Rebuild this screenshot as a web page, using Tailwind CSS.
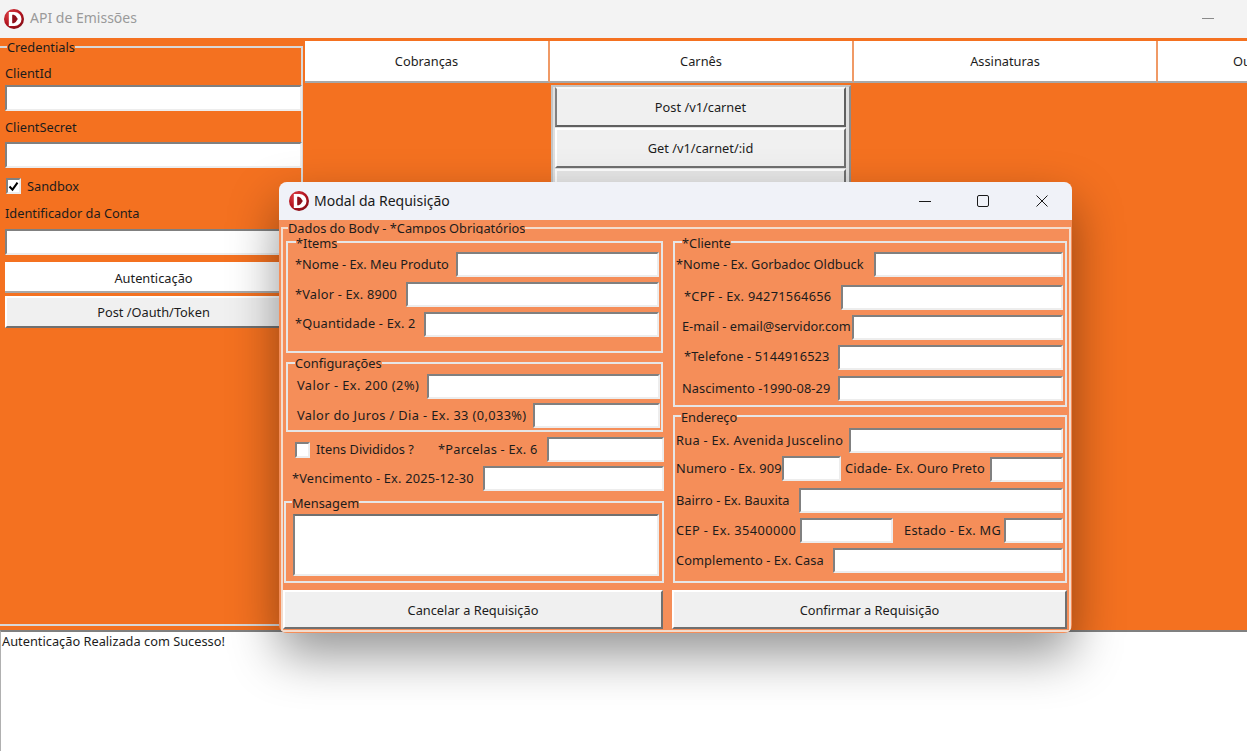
<!DOCTYPE html>
<html lang="en">
<head>
  <meta charset="UTF-8">
  <meta name="viewport" content="width=device-width, initial-scale=1.0">
  <title>API de Emissões</title>
  <script src="https://cdn.jsdelivr.net/npm/@tailwindcss/browser@4"></script>
</head>
<body class="relative h-[751px] w-[1247px] overflow-hidden bg-white font-['Noto_Sans',sans-serif] text-[12.8px] leading-[16px] text-[#1c1c1c]">

  <!-- Main window title bar -->
  <header class="flex h-[38px] items-center bg-[#f3f3f3] pl-[4px] pr-[33px]">
    <svg class="mb-px h-[20px] w-[20px] shrink-0" viewBox="0 0 20 20">
      <defs>
        <radialGradient id="logo-red" cx="35%" cy="30%" r="80%">
          <stop offset="0%" stop-color="#e0454a"/>
          <stop offset="60%" stop-color="#b3141f"/>
          <stop offset="100%" stop-color="#7c0d15"/>
        </radialGradient>
      </defs>
      <circle cx="10" cy="10" r="10" fill="url(#logo-red)"/>
      <path d="M4.8 3h5.7a7 7 0 0 1 0 14H4.8z" fill="#fff"/>
      <path d="M8.2 5.8h1.6q2 .3 4 4.2q-2 3.9-4 4.2H8.2z" fill="#8f101a"/>
    </svg>
    <span class="mb-[2px] ml-[6px] text-[14px] text-[#9a9a9a]">API de Emissões</span>
    <span class="mb-[2px] ml-auto h-px w-[12px] bg-[#8a8a8a]"></span>
  </header>

  <!-- Orange work area -->
  <main class="flex h-[592px] bg-[#f47120]">
    <aside class="w-[303px] shrink-0 pt-[3px]">
      <fieldset class="-ml-[2px] h-[585px] w-[305px] min-w-0 border-2 border-[#d8d8d8] pl-[5px]">
        <legend class="ml-[2px] h-[12px] leading-[12px]">Credentials</legend>
        <label class="mt-[12px] block h-[16px]">ClientId</label>
        <input type="text" class="mt-[4px] block h-[26px] w-[297px] border-2 border-t-[#808080] border-l-[#808080] border-r-[#ededed] border-b-[#ededed] bg-white">
        <label class="mt-[8px] block h-[16px]">ClientSecret</label>
        <input type="text" class="mt-[7px] block h-[26px] w-[297px] border-2 border-t-[#808080] border-l-[#808080] border-r-[#ededed] border-b-[#ededed] bg-white">
        <div class="mt-[10px] flex h-[16px] items-center">
          <span class="ml-[1px] flex h-[16px] w-[15px] items-center justify-center border-2 border-t-[#808080] border-l-[#808080] border-r-[#ededed] border-b-[#ededed] bg-white">
            <svg class="h-[11px] w-[11px]" viewBox="0 0 11 11"><path d="M1.5 5.5l3 3.2 5-7" fill="none" stroke="#000" stroke-width="2"/></svg>
          </span>
          <span class="ml-[6px]">Sandbox</span>
        </div>
        <label class="mt-[11px] block h-[16px]">Identificador da Conta</label>
        <input type="text" class="mt-[8px] block h-[26px] w-[297px] border-2 border-t-[#808080] border-l-[#808080] border-r-[#ededed] border-b-[#ededed] bg-white">
        <button class="mt-[7px] block h-[31px] w-[297px] border-b-2 border-[#a8a8a8] bg-white pt-[2px]">Autenticação</button>
        <button class="mt-[3px] block h-[32px] w-[297px] border-2 border-t-white border-l-white border-r-[#707070] border-b-[#707070] bg-[#f0f0f0]">Post /Oauth/Token</button>
      </fieldset>
    </aside>

    <section class="min-w-0 flex-1 pl-[2px] pt-[3px]">
      <!-- Tabs -->
      <nav class="flex h-[42px] overflow-hidden">
        <button class="h-full w-[245px] shrink-0 border-r-2 border-b-2 border-r-[#f09a66] border-b-[#a8a8a8] bg-white">Cobranças</button>
        <button class="h-full w-[304px] shrink-0 border-r-2 border-b-2 border-r-[#f09a66] border-b-[#a8a8a8] bg-white">Carnês</button>
        <button class="h-full w-[304px] shrink-0 border-r-2 border-b-2 border-r-[#f09a66] border-b-[#a8a8a8] bg-white">Assinaturas</button>
        <button class="h-full flex-1 border-b-2 border-b-[#a8a8a8] bg-white pl-[75px] text-left">Ou</button>
      </nav>
      <!-- Carnês endpoints -->
      <div class="ml-[246px] mt-[2px] flex h-[300px] w-[300px] flex-col gap-[1px] border-2 border-[#c4c4c4] border-r-[#8c8c8c] bg-[#e0e0e0] pl-[2px] pr-[3px]">
        <button class="h-[40px] border-2 border-t-[#f8f8f8] border-l-[#808080] border-r-[#606060] border-b-[#606060] bg-[#f0f0f0]">Post /v1/carnet</button>
        <button class="h-[40px] border-2 border-t-white border-l-white border-r-[#707070] border-b-[#707070] bg-[#f0f0f0]">Get /v1/carnet/:id</button>
        <button class="h-[40px] border-2 border-t-white border-l-white border-r-[#707070] border-b-[#707070] bg-[#e8e8e8]"></button>
      </div>
    </section>
  </main>

  <!-- Log output -->
  <div class="h-[121px] border-t-2 border-l border-t-[#808080] border-l-[#b0b0b0] pl-px pt-[1px]">Autenticação Realizada com Sucesso!</div>

  <!-- Modal window -->
  <div class="absolute left-[279px] top-[182px] h-[451px] w-[793px] overflow-hidden rounded-lg bg-[#f58e59] shadow-[0_22px_50px_rgba(0,0,0,0.42)]">
    <div class="flex h-[38px] items-center bg-[#f0f2f8] pl-[10px] pr-px">
      <svg class="h-[20px] w-[20px] shrink-0" viewBox="0 0 20 20">
        <circle cx="10" cy="10" r="10" fill="url(#logo-red)"/>
        <path d="M4.8 3h5.7a7 7 0 0 1 0 14H4.8z" fill="#fff"/>
        <path d="M8.2 5.8h1.6q2 .3 4 4.2q-2 3.9-4 4.2H8.2z" fill="#8f101a"/>
      </svg>
      <span class="ml-[5px] text-[14px] text-[#1a1a1a]">Modal da Requisição</span>
      <div class="ml-auto flex">
        <span class="flex h-[38px] w-[56px] items-center justify-center">
          <svg class="h-[12px] w-[12px]" viewBox="0 0 12 12"><path d="M0 6.5h12" stroke="#1a1a1a"/></svg>
        </span>
        <span class="flex h-[38px] w-[60px] items-center justify-center">
          <svg class="h-[12px] w-[12px]" viewBox="0 0 12 12"><rect x="0.5" y="0.5" width="11" height="11" rx="1.5" fill="none" stroke="#1a1a1a"/></svg>
        </span>
        <span class="flex h-[38px] w-[58px] items-center justify-center">
          <svg class="h-[12px] w-[12px]" viewBox="0 0 12 12"><path d="M0.5 0.5l11 11M11.5 0.5l-11 11" stroke="#1a1a1a"/></svg>
        </span>
      </div>
    </div>

    <div class="ml-[2px] w-[790px] pt-[2px]">
      <fieldset class="h-[410px] min-w-0 border-2 border-[#f3dccd]">
        <legend class="ml-[5px] h-[12px] overflow-hidden leading-[13px]">Dados do Body - *Campos Obrigatórios</legend>
        <div class="mt-[2px] flex gap-[8px]">

          <!-- Left column -->
          <div class="w-[381px] shrink-0 pl-px">
            <fieldset class="ml-[2px] h-[117px] w-[377px] min-w-0 border-2 border-[#e6e6e6]">
              <legend class="ml-[8px] h-[12px] leading-[15px]">*Items</legend>
              <div class="flex flex-col gap-[5px] pl-[7px] pr-[2px] pt-[4px]">
                <div class="flex items-center"><span class="w-[161px] shrink-0 pb-[2px]">*Nome - Ex. Meu Produto</span><input type="text" class="h-[25px] min-w-0 flex-1 border-2 border-t-[#808080] border-l-[#808080] border-r-[#ededed] border-b-[#ededed] bg-white"></div>
                <div class="flex items-center"><span class="w-[111px] shrink-0 pb-[2px] tracking-[0.2px]">*Valor - Ex. 8900</span><input type="text" class="h-[25px] min-w-0 flex-1 border-2 border-t-[#808080] border-l-[#808080] border-r-[#ededed] border-b-[#ededed] bg-white"></div>
                <div class="flex items-center"><span class="w-[129px] shrink-0 pb-[4px] tracking-[0.2px]">*Quantidade - Ex. 2</span><input type="text" class="h-[25px] min-w-0 flex-1 border-2 border-t-[#808080] border-l-[#808080] border-r-[#ededed] border-b-[#ededed] bg-white"></div>
              </div>
            </fieldset>
            <fieldset class="ml-[2px] mt-[4px] h-[75px] w-[377px] min-w-0 border-2 border-[#e6e6e6]">
              <legend class="ml-[7px] h-[12px] leading-[12px]">Configurações</legend>
              <div class="flex flex-col gap-[4px] pl-[9px] pr-px pt-[5px]">
                <div class="flex items-center"><span class="w-[130px] shrink-0 pb-[4px] tracking-[0.45px]">Valor - Ex. 200 (2%)</span><input type="text" class="h-[25px] min-w-0 flex-1 border-2 border-t-[#808080] border-l-[#808080] border-r-[#ededed] border-b-[#ededed] bg-white"></div>
                <div class="flex items-center"><span class="w-[236px] shrink-0 pb-[2px] tracking-[0.38px]">Valor do Juros / Dia - Ex. 33 (0,033%)</span><input type="text" class="h-[25px] min-w-0 flex-1 border-2 border-t-[#808080] border-l-[#808080] border-r-[#ededed] border-b-[#ededed] bg-white"></div>
              </div>
            </fieldset>
            <div class="mt-[5px] flex items-center pl-[11px]">
              <span class="h-[16px] w-[15px] shrink-0 border-2 border-t-[#808080] border-l-[#808080] border-r-[#ededed] border-b-[#ededed] bg-white"></span>
              <span class="ml-[6px] w-[122px] shrink-0 pb-[2px]">Itens Divididos ?</span>
              <span class="w-[109px] shrink-0 pb-[2px] tracking-[0.23px]">*Parcelas - Ex. 6</span>
              <input type="text" class="h-[25px] min-w-0 flex-1 border-2 border-t-[#808080] border-l-[#808080] border-r-[#ededed] border-b-[#ededed] bg-white">
            </div>
            <div class="mt-[4px] flex items-center pl-[8px]">
              <span class="w-[191px] shrink-0 pb-[2px] tracking-[0.18px]">*Vencimento - Ex. 2025-12-30</span>
              <input type="text" class="h-[25px] min-w-0 flex-1 border-2 border-t-[#808080] border-l-[#808080] border-r-[#ededed] border-b-[#ededed] bg-white">
            </div>
            <fieldset class="mt-[5px] h-[87px] min-w-0 border-2 border-[#e6e6e6]">
              <legend class="ml-[6px] h-[12px] leading-[15px]">Mensagem</legend>
              <textarea class="ml-[7px] mt-[6px] block h-[62px] w-[366px] resize-none border-2 border-t-[#707070] border-l-[#808080] border-r-[#ededed] border-b-[#ededed] bg-white"></textarea>
            </fieldset>
          </div>

          <!-- Right column -->
          <div class="w-[395px] shrink-0 pl-px">
            <fieldset class="h-[171px] min-w-0 border-2 border-[#e6e6e6]">
              <legend class="ml-[7px] h-[12px] leading-[15px]">*Cliente</legend>
              <div class="pr-[2px] pt-[4px]">
                <div class="flex items-center pl-px"><span class="w-[198px] shrink-0 pb-[2px]">*Nome - Ex. Gorbadoc Oldbuck</span><input type="text" class="h-[25px] min-w-0 flex-1 border-2 border-t-[#808080] border-l-[#808080] border-r-[#ededed] border-b-[#ededed] bg-white"></div>
                <div class="mt-[8px] flex items-center pl-[9px]"><span class="w-[157px] shrink-0 pb-[4px] tracking-[0.27px]">*CPF - Ex. 94271564656</span><input type="text" class="h-[25px] min-w-0 flex-1 border-2 border-t-[#808080] border-l-[#808080] border-r-[#ededed] border-b-[#ededed] bg-white"></div>
                <div class="mt-[5px] flex items-center pl-[7px]"><span class="w-[170px] shrink-0 pb-[4px]">E-mail - email@servidor.com</span><input type="text" class="h-[25px] min-w-0 flex-1 border-2 border-t-[#808080] border-l-[#808080] border-r-[#ededed] border-b-[#ededed] bg-white"></div>
                <div class="mt-[5px] flex items-center pl-[9px]"><span class="w-[154px] shrink-0 pb-[4px] tracking-[0.15px]">*Telefone - 5144916523</span><input type="text" class="h-[25px] min-w-0 flex-1 border-2 border-t-[#808080] border-l-[#808080] border-r-[#ededed] border-b-[#ededed] bg-white"></div>
                <div class="mt-[6px] flex items-center pl-[7px]"><span class="w-[156px] shrink-0 pb-[2px] tracking-[0.1px]">Nascimento -1990-08-29</span><input type="text" class="h-[25px] min-w-0 flex-1 border-2 border-t-[#808080] border-l-[#808080] border-r-[#ededed] border-b-[#ededed] bg-white"></div>
              </div>
            </fieldset>
            <fieldset class="mt-[3px] h-[173px] min-w-0 border-2 border-[#e6e6e6]">
              <legend class="ml-[6px] h-[12px] leading-[15px]">Endereço</legend>
              <div class="pl-px pr-[2px] pt-[6px]">
                <div class="flex items-center"><span class="w-[173px] shrink-0 pb-[2px] tracking-[0.3px]">Rua - Ex. Avenida Juscelino</span><input type="text" class="h-[25px] min-w-0 flex-1 border-2 border-t-[#808080] border-l-[#808080] border-r-[#ededed] border-b-[#ededed] bg-white"></div>
                <div class="mt-[3px] flex items-start">
                  <span class="w-[106px] shrink-0 pt-[4px] tracking-[0.18px]">Numero - Ex. 909</span>
                  <input type="text" class="h-[25px] w-[59px] shrink-0 border-2 border-t-[#808080] border-l-[#808080] border-r-[#ededed] border-b-[#ededed] bg-white">
                  <span class="ml-[4px] w-[145px] shrink-0 pt-[4px] tracking-[0.18px]">Cidade- Ex. Ouro Preto</span>
                  <input type="text" class="mt-px h-[25px] min-w-0 flex-1 border-2 border-t-[#808080] border-l-[#808080] border-r-[#ededed] border-b-[#ededed] bg-white">
                </div>
                <div class="mt-[6px] flex items-center"><span class="w-[123px] shrink-0 pb-[2px]">Bairro - Ex. Bauxita</span><input type="text" class="h-[25px] min-w-0 flex-1 border-2 border-t-[#808080] border-l-[#808080] border-r-[#ededed] border-b-[#ededed] bg-white"></div>
                <div class="mt-[5px] flex items-center">
                  <span class="w-[124px] shrink-0 pb-[2px] tracking-[0.4px]">CEP - Ex. 35400000</span>
                  <input type="text" class="h-[25px] w-[93px] shrink-0 border-2 border-t-[#808080] border-l-[#808080] border-r-[#ededed] border-b-[#ededed] bg-white">
                  <span class="ml-[11px] w-[100px] shrink-0 pb-[2px] tracking-[0.27px]">Estado - Ex. MG</span>
                  <input type="text" class="h-[25px] min-w-0 flex-1 border-2 border-t-[#808080] border-l-[#808080] border-r-[#ededed] border-b-[#ededed] bg-white">
                </div>
                <div class="mt-[5px] flex items-center"><span class="w-[157px] shrink-0 pb-[2px] tracking-[0.1px]">Complemento - Ex. Casa</span><input type="text" class="h-[25px] min-w-0 flex-1 border-2 border-t-[#808080] border-l-[#808080] border-r-[#ededed] border-b-[#ededed] bg-white"></div>
              </div>
            </fieldset>
          </div>
        </div>

        <!-- Modal actions -->
        <div class="mt-[7px] flex gap-[9px]">
          <button class="h-[39px] w-[380px] shrink-0 border-2 border-t-white border-l-white border-r-[#707070] border-b-[#707070] bg-[#f0f0f0] pt-px">Cancelar a Requisição</button>
          <button class="h-[39px] w-[395px] shrink-0 border-2 border-t-white border-l-white border-r-[#707070] border-b-[#707070] bg-[#f0f0f0] pt-px">Confirmar a Requisição</button>
        </div>
      </fieldset>
    </div>
  </div>
</body>
</html>
